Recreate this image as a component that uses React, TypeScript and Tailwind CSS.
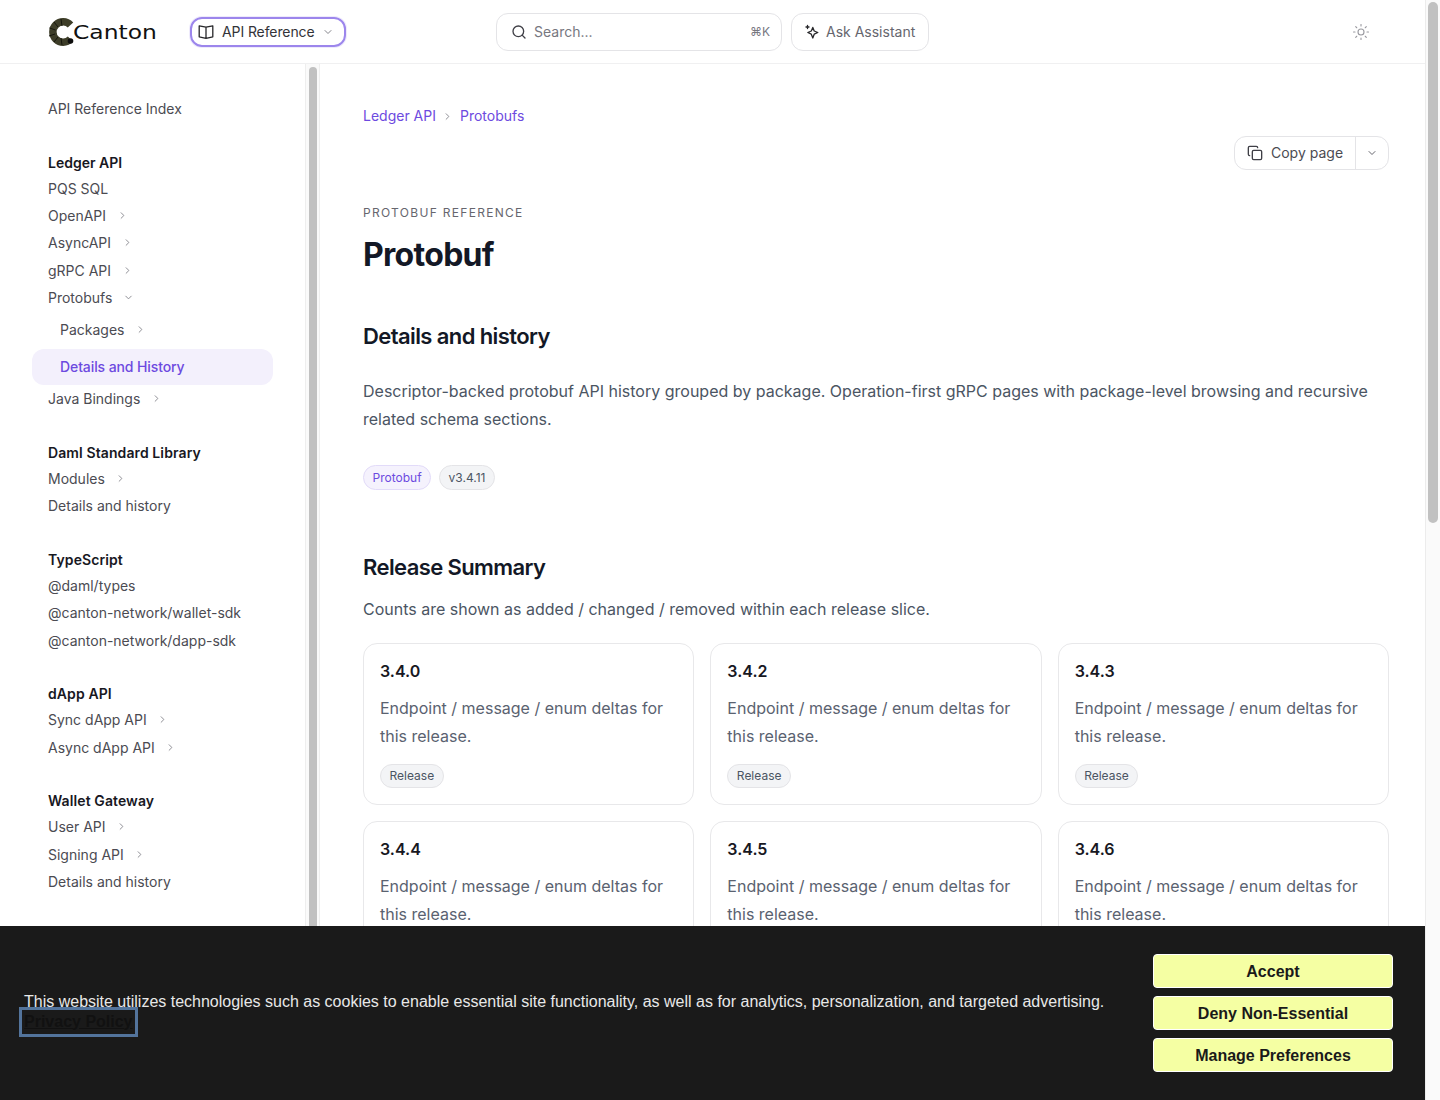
import { ChevronDown, ChevronRight, Copy, Search, Sun } from 'lucide-react'

type NavItem = { label: string; arrow?: boolean; open?: boolean }
type NavGroup = { title: string; items: NavItem[] }

const groups: NavGroup[] = [
  {
    title: 'Daml Standard Library',
    items: [{ label: 'Modules', arrow: true }, { label: 'Details and history' }],
  },
  {
    title: 'TypeScript',
    items: [{ label: '@daml/types' }, { label: '@canton-network/wallet-sdk' }, { label: '@canton-network/dapp-sdk' }],
  },
  {
    title: 'dApp API',
    items: [
      { label: 'Sync dApp API', arrow: true },
      { label: 'Async dApp API', arrow: true },
    ],
  },
  {
    title: 'Wallet Gateway',
    items: [{ label: 'User API', arrow: true }, { label: 'Signing API', arrow: true }, { label: 'Details and history' }],
  },
]

const releases = ['3.4.0', '3.4.2', '3.4.3', '3.4.4', '3.4.5', '3.4.6']

function NavRow({ label, arrow, open }: NavItem) {
  return (
    <div className="flex h-[27.2px] items-center gap-[10.5px] text-[14px] text-[#4b4b52]">
      <span>{label}</span>
      {arrow && <ChevronRight size={11} className="text-[#85858c]" />}
      {open && <ChevronDown size={11} className="text-[#85858c]" />}
    </div>
  )
}

function Sidebar() {
  return (
    <aside className="flex h-[1036px] w-[320px] shrink-0">
      <div className="w-[305px] shrink-0 pt-[31px]">
        <div className="flex h-[27px] items-center pl-[48px] text-[14px] text-[#4b4b52]">API Reference Index</div>
        <div className="mt-[27px] pl-[48px]">
          <div className="flex h-[26px] items-center text-[14px] font-semibold text-[#18181f]">Ledger API</div>
          <NavRow label="PQS SQL" />
          <NavRow label="OpenAPI" arrow />
          <NavRow label="AsyncAPI" arrow />
          <NavRow label="gRPC API" arrow />
          <NavRow label="Protobufs" open />
        </div>
        <div className="mt-[5px] flex h-[27px] items-center gap-[10.5px] pl-[60px] text-[14px] text-[#4b4b52]">
          <span>Packages</span>
          <ChevronRight size={11} className="text-[#85858c]" />
        </div>
        <div className="ml-[32px] mt-[6px] flex h-[36px] w-[241px] items-center rounded-[12px] bg-[#f3f0fc] pl-[28px] text-[14px] font-medium tracking-[-0.1px] text-[#6d4ae0]">
          Details and History
        </div>
        <div className="pl-[48px]">
          <NavRow label="Java Bindings" arrow />
        </div>
        <div className="mt-[27px] flex flex-col gap-[26.6px] pl-[48px]">
          {groups.map((g) => (
            <div key={g.title}>
              <div className="flex h-[26px] items-center text-[14px] font-semibold tracking-[0.1px] text-[#18181f]">{g.title}</div>
              {g.items.map((it) => (
                <NavRow key={it.label} {...it} />
              ))}
            </div>
          ))}
        </div>
      </div>
      <div className="w-[15px] shrink-0 border-x border-[#eeeeee] bg-[#fafafa] pl-[3px] pt-[3px]">
        <div className="h-[900px] w-[8px] rounded-full bg-[#c1c1c1]" />
      </div>
    </aside>
  )
}

function ReleaseCard({ version }: { version: string }) {
  return (
    <div className="h-[162px] rounded-[14px] border border-[#e8e8ea] bg-white px-[16px] pt-[15px]">
      <div className="text-[16px] font-semibold leading-[24px] text-[#18181f]">{version}</div>
      <p className="mt-[11px] text-[16px] leading-[28px] text-[#5a6270]">Endpoint / message / enum deltas for this release.</p>
      <span className="mt-[14px] inline-flex h-[24px] items-center rounded-full border border-[#e4e4e7] bg-[#f3f4f6] px-[8.5px] text-[12px] text-[#4b5563]">
        Release
      </span>
    </div>
  )
}

export default function App() {
  return (
    <div className="relative flex h-[1100px] w-[1440px] overflow-hidden bg-white font-['Inter',sans-serif] antialiased">
      <div className="w-[1425px] shrink-0">
        <header className="flex h-[64px] items-center border-b border-[#f0f0f1] pl-[48px]">
          <div className="flex w-[142px] items-center">
            <svg width="26" height="28" viewBox="0 0 26 28" className="shrink-0">
              <path d="M22.5 7A10.2 10.2 0 1 0 22.5 21" fill="none" stroke="#3d3d28" strokeWidth="7.5" />
              <circle cx="22.5" cy="23" r="2.8" fill="#0d0d0d" />
              <path d="M13 1 14 8M6 4l4 5M1.5 10l6 2M1 18l6-2M6 24l4-5M14 27l-1-7" stroke="#15150c" strokeWidth="1" />
            </svg>
            <span className="ml-[-1px] inline-block origin-left scale-x-[1.17] font-['DejaVu_Sans',sans-serif] text-[20px] leading-none text-[#111111]">
              Canton
            </span>
          </div>
          <button className="flex h-[30px] w-[156px] items-center rounded-[12px] border-2 border-[#9c86ec] pl-[5px] text-[14px] text-[#333338] shadow-[0_0_0_1px_#eeeafc]">
            <svg width="18" height="18" viewBox="0 0 18 18" fill="none" stroke="#27272a" strokeWidth="1.3" strokeLinejoin="round">
              <path d="M9 4.2 2.2 2.8v11l6.8 1.6 6.8-1.6v-11L9 4.2ZM9 4.2v11.2" />
            </svg>
            <span className="ml-[7px] tracking-[-0.1px]">API Reference</span>
            <ChevronDown size={12} className="ml-[7px] text-[#85858c]" />
          </button>
          <div className="ml-[150px] flex h-[38px] w-[286px] items-center rounded-[12px] border border-[#e4e4e7] pl-[14px] pr-[11px]">
            <Search size={16} className="text-[#3f3f46]" />
            <span className="ml-[7px] text-[14px] text-[#77777f]">Search...</span>
            <span className="ml-auto text-[12px] text-[#77777f]">⌘K</span>
          </div>
          <button className="ml-[9px] flex h-[38px] w-[138px] items-center rounded-[12px] border border-[#e4e4e7] pl-[12px] text-[14px] text-[#66666e]">
            <svg width="16" height="16" viewBox="0 0 16 16" fill="none" stroke="#27272a" strokeWidth="1.3" strokeLinejoin="round" strokeLinecap="round">
              <path d="M8.8 3.4 10.2 7l3.6 1.5-3.6 1.7-1.4 3.8-1.5-3.8-3.5-1.7L7.3 7l1.5-3.6Z" />
              <path d="M3.5 1.5v3M2 3h3" />
            </svg>
            <span className="ml-[6px]">Ask Assistant</span>
          </button>
          <Sun size={18} strokeWidth={1.5} className="ml-[423px] text-[#9a9aa0]" />
        </header>
        <div className="flex">
          <Sidebar />
          <main className="w-[1105px] pl-[43px] pr-[36px] pt-[43px]">
            <div className="flex items-center text-[14px] leading-[18px] text-[#6d4ae0]">
              <span>Ledger API</span>
              <ChevronRight size={11} className="ml-[6px] mr-[7px] text-[#85858c]" />
              <span>Protobufs</span>
            </div>
            <div className="mt-[11px] flex justify-end">
              <div className="flex h-[34px] w-[155px] items-center rounded-[12px] border border-[#e4e4e7] text-[14px] text-[#4b4b52]">
                <div className="flex h-full w-[121px] items-center border-r border-[#e4e4e7] pb-[1px] pl-[12px]">
                  <Copy size={16} className="text-[#3f3f46]" />
                  <span className="ml-[8px]">Copy page</span>
                </div>
                <ChevronDown size={12} className="ml-[10px] text-[#66666e]" />
              </div>
            </div>
            <div className="mt-[35px] text-[12px] uppercase leading-[16px] tracking-[1.3px] text-[#66666e]">Protobuf Reference</div>
            <h1 className="mt-[14px] text-[32px] font-bold leading-[40px] tracking-[-0.7px] text-[#131826]">Protobuf</h1>
            <h2 className="mt-[46px] text-[22px] font-semibold leading-[30px] tracking-[-0.6px] text-[#131826]">Details and history</h2>
            <p className="mt-[26px] text-[16px] leading-[28px] text-[#4b5563]">
              Descriptor-backed protobuf API history grouped by package. Operation-first gRPC pages with package-level browsing and recursive related schema sections.
            </p>
            <div className="mt-[32px] flex gap-[8px]">
              <span className="inline-flex h-[25px] items-center rounded-full border border-[#e2dbf9] bg-[#f5f2fd] px-[8.5px] text-[12px] text-[#6d4ae0]">Protobuf</span>
              <span className="inline-flex h-[25px] items-center rounded-full border border-[#e4e4e7] bg-[#f3f4f6] px-[8.5px] text-[12px] text-[#4b5563]">v3.4.11</span>
            </div>
            <h2 className="mt-[62px] text-[22px] font-semibold leading-[30px] tracking-[-0.6px] text-[#131826]">Release Summary</h2>
            <p className="mt-[13px] text-[16px] leading-[28px] text-[#4b5563]">Counts are shown as added / changed / removed within each release slice.</p>
            <div className="mt-[20px] grid grid-cols-3 gap-[16px]">
              {releases.map((r) => (
                <ReleaseCard key={r} version={r} />
              ))}
            </div>
          </main>
        </div>
      </div>
      <div className="w-[15px] shrink-0 border-l border-[#ececec] bg-[#fafafa] pl-[2px] pt-[2px]">
        <div className="h-[521px] w-[10px] rounded-full bg-[#c1c1c1]" />
      </div>

      <div className="absolute bottom-0 left-0 flex h-[174px] w-[1425px] items-center justify-between bg-[#1a1a1a] pl-[24px] pr-[32px] font-['Liberation_Sans',sans-serif]">
        <div className="mt-[-3px] w-[1100px] leading-[20px]">
          <p className="text-[16px] leading-[20px] text-[#e8e8e8]">
            This website utilizes technologies such as cookies to enable essential site functionality, as well as for analytics, personalization, and targeted advertising.
          </p>
          <a className="inline-block align-top text-[16px] font-bold leading-[20px] text-[#111111] underline outline-3 outline-offset-2 outline-[#53749c]">Privacy Policy</a>
        </div>
        <div className="flex w-[240px] flex-col gap-[8px]">
          {['Accept', 'Deny Non-Essential', 'Manage Preferences'].map((b) => (
            <button key={b} className="h-[34px] rounded-[4px] border border-white bg-[#f5ffa3] pt-[1px] text-[16px] font-bold text-[#1a1a1a]">
              {b}
            </button>
          ))}
        </div>
      </div>
    </div>
  )
}
